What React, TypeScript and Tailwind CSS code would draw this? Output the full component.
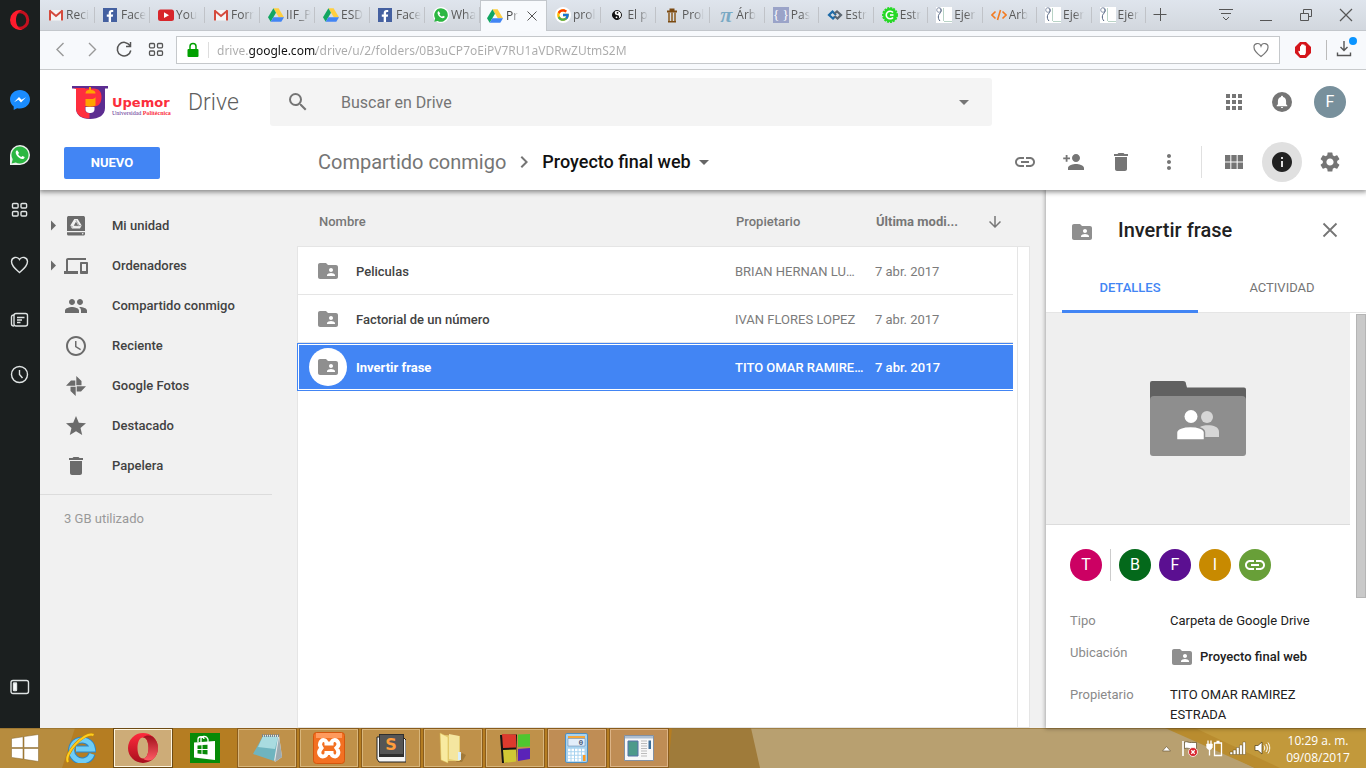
import React from "react";
import {
  MdAccessTime,
  MdApps,
  MdArrowDownward,
  MdArrowDropDown,
  MdChevronRight,
  MdDelete,
  MdFolderShared,
  MdInfo,
  MdLink,
  MdMoreVert,
  MdPhonelink,
  MdSearch,
  MdSettings,
  MdStar,
  MdViewModule,
} from "react-icons/md";
import { FaFacebookF } from "react-icons/fa";
import { FcGoogle } from "react-icons/fc";

/* ---------- Favicons ---------- */

const Gmail = () => (
  <svg viewBox="0 0 16 16" className="size-4 shrink-0">
    <path d="M1.5 3h13v10.500h-13z" fill="#f5f5f5" />
    <path d="M2 3.200v10.300M14 3.200v10.300" stroke="#d54b3d" strokeWidth="2" />
    <path d="M1.500 3.500L8 9l6.500-5.500" stroke="#d54b3d" strokeWidth="2" fill="none" />
  </svg>
);

const Facebook = () => (
  <span className="mr-[2px] flex size-[14px] shrink-0 items-end justify-end bg-[#4460a0] text-white">
    <FaFacebookF className="mr-px size-3" />
  </span>
);

const YouTube = () => (
  <svg viewBox="0 0 16 16" className="size-4 shrink-0">
    <rect x="0" y="2.500" width="16" height="11.500" rx="2.500" fill="#d8262b" />
    <path d="M6 5.300l5 2.900-5 2.900z" fill="#fff" />
  </svg>
);

const DriveLogo = () => (
  <svg viewBox="0 0 16 16" className="size-4 shrink-0">
    <path d="M5.400 1.200h5.200L16 10.300h-5.200z" fill="#ffcf40" />
    <path d="M5.400 1.200L8 5.700 2.700 14.700 0 10.300z" fill="#11a661" />
    <path d="M5.300 10.300H16l-2.700 4.500H2.700z" fill="#4285f4" />
  </svg>
);

const WhatsAppMark = ({ ring }: { ring?: boolean }) => (
  <span
    className={
      ring
        ? "flex size-5 shrink-0 items-center justify-center rounded-full rounded-bl-sm bg-[#eef2ee]"
        : "flex size-4 shrink-0 items-center justify-center rounded-full bg-white"
    }
  >
    <svg viewBox="0 0 20 20" className="size-full">
      <path d="M10 1.500a8.500 8.500 0 0 0-7.300 12.800L1.600 18.400l4.200-1A8.500 8.500 0 1 0 10 1.500z" fill="#2cb742" />
      <path
        d="M7.200 5.300c-.4 0-1.700.8-1.500 2.500.3 2.500 3.400 6 6.500 6.300 1.500 0 2.500-1 2.400-2.100l-2.100-1.100-1.200 1.200c-1.400-.5-2.700-1.800-3.200-3l1-1.100z"
        fill="#fff"
      />
    </svg>
  </span>
);

const YinYang = () => (
  <svg viewBox="0 0 16 16" className="size-4 shrink-0">
    <circle cx="8" cy="8" r="4.500" fill="#fff" stroke="#111" />
    <path d="M8 3.500a4.500 4.500 0 0 0 0 9 2.200 2.200 0 0 0 0-4.500 2.200 2.200 0 0 1 0-4.500z" fill="#111" />
    <circle cx="8.500" cy="5.800" r=".9" fill="#111" />
    <circle cx="7.500" cy="10.300" r=".9" fill="#fff" />
  </svg>
);

const Column = () => (
  <svg viewBox="0 0 16 16" className="size-4 shrink-0">
    <path d="M3 3.500h10v2H3zM5.500 1.500h5v2h-5zM4 14h8v1.500H4z" fill="#7b4a12" />
    <path d="M5 5.500v8.500M8 5.500v8.500M11 5.500v8.500" stroke="#8a5a1c" strokeWidth="1.500" />
  </svg>
);

const Pi = () => (
  <span className="flex size-4 shrink-0 items-center justify-center font-['Liberation_Serif',serif] text-[22px] leading-4 font-bold text-[#79a9c4] italic">
    π
  </span>
);

const Braces = () => (
  <span className="flex size-4 shrink-0 items-center justify-center bg-[#9aa3c8] font-['Liberation_Serif',serif] text-[13px] leading-4 text-white">
    {"{ }"}
  </span>
);

const Knot = () => (
  <svg viewBox="0 0 16 16" className="size-4 shrink-0" fill="none" strokeWidth="2.200">
    <path d="M8 9.500L6 11.500 2 8l3.500-3.500L9 8" stroke="#1c6aa8" />
    <path d="M7.500 6.500L10 4.500 14 8l-3.500 3.500L7.500 9" stroke="#5b6570" />
  </svg>
);

const GreenC = () => (
  <svg viewBox="0 0 16 16" className="size-4 shrink-0">
    <circle cx="8" cy="8" r="7" fill="#26d926" stroke="#26d926" strokeWidth="2" strokeDasharray="2 1" />
    <path d="M11 5.600A3.800 3.800 0 1 0 11 10.400" fill="none" stroke="#fff" strokeWidth="1.600" />
    <path d="M8 8h3.500" stroke="#fff" strokeWidth="1.600" />
  </svg>
);

const Sheet = () => (
  <svg viewBox="0 0 16 16" className="size-4 shrink-0">
    <path d="M0 0h16v16H0z" fill="#fff" />
    <circle cx="3" cy="3" r="2.300" fill="none" stroke="#8b97ad" />
    <path d="M4 1.500c3 3-1 5-1.500 7s0 4 1.500 5.500" fill="none" stroke="#51627f" />
    <path d="M7.500 1v13M8 14.500h8" stroke="#b9d3c6" />
  </svg>
);

const CodeMark = () => (
  <svg viewBox="0 0 16 16" className="size-4 shrink-0" fill="none" stroke="#f37a20" strokeWidth="1.600">
    <path d="M4.500 4.500L1 8l3.500 3.500M11.500 4.500L15 8l-3.500 3.500M9.500 3l-3 10" />
  </svg>
);

const GoogleMark = () => (
  <span className="flex size-4 shrink-0 items-center justify-center rounded-full bg-white">
    <FcGoogle className="size-[14px]" />
  </span>
);

/* ---------- Browser chrome ---------- */

type TabData = { icon: React.ReactNode; title: string };

const tabsBefore: TabData[] = [
  { icon: <Gmail />, title: "Reci" },
  { icon: <Facebook />, title: "Face" },
  { icon: <YouTube />, title: "You" },
  { icon: <Gmail />, title: "Forr" },
  { icon: <DriveLogo />, title: "IIF_P" },
  { icon: <DriveLogo />, title: "ESD" },
  { icon: <Facebook />, title: "Face" },
  { icon: <WhatsAppMark />, title: "Wha" },
];

const tabsAfter: TabData[] = [
  { icon: <GoogleMark />, title: "prol" },
  { icon: <YinYang />, title: "El p" },
  { icon: <Column />, title: "Prol" },
  { icon: <Pi />, title: "Árb" },
  { icon: <Braces />, title: "Pas" },
  { icon: <Knot />, title: "Estr" },
  { icon: <GreenC />, title: "Estr" },
  { icon: <Sheet />, title: "Ejer" },
  { icon: <CodeMark />, title: "Arb" },
  { icon: <Sheet />, title: "Ejer" },
  { icon: <Sheet />, title: "Ejer" },
];

const fade = "[mask-image:linear-gradient(to_right,black_55%,transparent)]";

function Tab({ tab, size }: { tab: TabData; size: string }) {
  return (
    <button
      className={`relative flex h-[30px] items-center gap-[2px] pl-2 text-left after:absolute after:right-0 after:top-[7px] after:h-4 after:w-px after:bg-[#c0c3c8] ${size}`}
    >
      {tab.icon}
      <span className={`whitespace-nowrap ${fade}`}>{tab.title}</span>
    </button>
  );
}

function ActiveTab() {
  return (
    <div className="flex h-[31px] w-[67px] shrink-0 items-center border-x border-t border-[#c3c7cc] bg-[#f8fafd] pl-[6px]">
      <button className="flex items-center gap-[3px] text-left">
        <DriveLogo />
        <span className={`whitespace-nowrap text-[#444] ${fade}`}>Pr</span>
      </button>
      <button aria-label="Cerrar pestaña" className="ml-auto mr-[9px]">
        <svg viewBox="0 0 10 10" className="size-[10px]" stroke="#555" fill="none">
          <path d="M.5.5l9 9M9.500.5l-9 9" />
        </svg>
      </button>
    </div>
  );
}

function TabBar() {
  return (
    <div className="flex h-[31px] border-b border-[#c3c7cc] bg-linear-to-b from-[#dfe5ed] to-[#d2d7de] font-['Open_Sans','Noto_Sans',sans-serif] text-xs text-[#5a5a5a]">
      <div className="flex min-w-0 flex-1">
        {tabsBefore.map((tab, i) => (
          <Tab key={i} tab={tab} size="w-[55px] shrink-0" />
        ))}
        <ActiveTab />
        {tabsAfter.map((tab, i) => (
          <Tab key={i} tab={tab} size="min-w-0 flex-1" />
        ))}
      </div>
      <div className="flex h-[30px] w-[220px] shrink-0 items-center justify-between pl-[7px] pr-[10px]">
        <button aria-label="Nueva pestaña" className="mr-[29px]">
          <svg viewBox="0 0 14 14" className="size-[14px]" stroke="#555" fill="none">
            <path d="M.5 6.500h13M7.500 0v13" />
          </svg>
        </button>
        <button aria-label="Menú de pestañas">
          <svg viewBox="0 0 20 20" className="size-5" stroke="#555" fill="none">
            <path d="M3 4.500h14M5 8.500h10M7 12l3 3 3-3" />
          </svg>
        </button>
        <button aria-label="Minimizar">
          <svg viewBox="0 0 20 20" className="size-5" stroke="#555" fill="none">
            <path d="M4 15.500h12" />
          </svg>
        </button>
        <button aria-label="Restaurar">
          <svg viewBox="0 0 20 20" className="size-5" stroke="#555" fill="none">
            <path d="M4.500 8.500h8v7h-8zM7.500 8.500v-4h8v7h-3" />
          </svg>
        </button>
        <button aria-label="Cerrar">
          <svg viewBox="0 0 20 20" className="size-5" stroke="#555" fill="none" strokeWidth="1.200">
            <path d="M4 4l12 12M16 4L4 16" />
          </svg>
        </button>
      </div>
    </div>
  );
}

function AddressBar() {
  return (
    <div className="flex h-[39px] items-center border-b border-[#c8cacc] bg-[#f7f9fc] pl-[10px] pr-3">
      <div className="flex items-center gap-3">
        <button aria-label="Atrás">
          <svg viewBox="0 0 20 20" className="size-5" stroke="#999" fill="none" strokeWidth="1.400">
            <path d="M13.500 3L7 9.500l6.500 6.500" />
          </svg>
        </button>
        <button aria-label="Adelante">
          <svg viewBox="0 0 20 20" className="size-5" stroke="#999" fill="none" strokeWidth="1.400">
            <path d="M7 3l6.500 6.500L7 16" />
          </svg>
        </button>
        <button aria-label="Recargar">
          <svg viewBox="0 0 20 20" className="size-5" stroke="#555" fill="none" strokeWidth="1.500">
            <path d="M16 5.700A6.800 6.800 0 1 0 16.800 10.500M16.500 2v4.500h-4.500" />
          </svg>
        </button>
        <button aria-label="Acceso rápido">
          <svg viewBox="0 0 20 20" className="size-5" stroke="#555" fill="none" strokeWidth="1.300">
            <rect x="3.500" y="3.500" width="5" height="4.300" rx="1" />
            <rect x="11.500" y="3.500" width="5" height="4.300" rx="1" />
            <rect x="3.500" y="11" width="5" height="4.300" rx="1" />
            <rect x="11.500" y="11" width="5" height="4.300" rx="1" />
          </svg>
        </button>
      </div>
      <div className="ml-[10px] flex h-7 min-w-0 flex-1 items-center border border-[#c5c8cb] bg-white px-[9px]">
        <svg viewBox="0 0 14 16" className="h-4 w-[14px] shrink-0">
          <rect x="1.500" y="7" width="11" height="8" rx="1" fill="#00a000" />
          <path d="M4 7V4.500a3 3 0 0 1 6 0V7" stroke="#00a000" strokeWidth="1.500" fill="none" />
        </svg>
        <span className="ml-2 h-4 w-px bg-[#ddd]" />
        <input
          aria-label="Dirección"
          defaultValue="drive.google.com/drive/u/2/folders/0B3uCP7oEiPV7RU1aVDRwZUtmS2M"
          className="ml-2 h-6 min-w-0 flex-1 bg-[linear-gradient(to_right,#aaaaaa_32px,#111111_32px,#111111_99px,#aaaaaa_99px)] bg-clip-text font-['Noto_Sans','Open_Sans',sans-serif] text-xs text-transparent outline-none"
        />
        <button aria-label="Añadir a marcadores">
          <svg viewBox="0 0 18 18" className="size-[18px]" stroke="#777" fill="none" strokeWidth="1.200">
            <path d="M9 15.500C5 12.500 2 10 2 6.500A3.600 3.600 0 0 1 9 5a3.600 3.600 0 0 1 7 1.500c0 3.500-3 6-7 9z" />
          </svg>
        </button>
      </div>
      <button aria-label="Bloqueador" className="ml-[15px]">
        <svg viewBox="0 0 16 16" className="size-4">
          <path d="M5 0h6l5 5v6l-5 5H5l-5-5V5z" fill="#d5151b" />
          <path
            d="M5 12.500c-1-1.500-2-3-1.500-3.500S5 9.500 5 9V4.500c0-.8 1-.8 1 0V3c0-.8 1.200-.8 1.200 0v-.3c0-.8 1.300-.8 1.300 0V3c0-.8 1.200-.8 1.200 0v1.200c0-.8 1.200-.8 1.200 0V10c0 1.500-.5 2-1 3H5z"
            fill="#fff"
          />
        </svg>
      </button>
      <span className="ml-[15px] h-5 w-px bg-[#bbb]" />
      <button aria-label="Descargas" className="relative ml-[7px]">
        <svg viewBox="0 0 20 20" className="size-5" stroke="#555" fill="none" strokeWidth="1.400">
          <path d="M10 1v9M6.500 7l3.500 3.500L13.500 7M3.500 12.500V15.500h13v-3" />
        </svg>
        <span className="absolute -right-[3px] -top-[3px] size-2 rounded-full bg-[#0a94ff]" />
      </button>
    </div>
  );
}

function OperaSidebar() {
  const line = { fill: "none", stroke: "#dfe3e3", strokeWidth: 1.4 };
  const cell = "flex h-[55px] w-10 items-center justify-center";
  return (
    <nav className="flex w-10 shrink-0 flex-col bg-[#1b1f1f]">
      <button aria-label="Opera" className="mb-8 flex h-10 items-center justify-center">
        <svg viewBox="0 0 20 20" className="size-5">
          <ellipse cx="10" cy="10" rx="7.800" ry="8.200" fill="none" stroke="#c4101f" strokeWidth="3" />
          <path d="M10 0a10 10 0 0 0 0 20 12 12 0 0 0 3-.6C9 20 6 15 6 10S9 0 13 .6A12 12 0 0 0 10 0z" fill="#ff1b2d" />
        </svg>
      </button>
      <button aria-label="Messenger" className={cell}>
        <svg viewBox="0 0 20 20" className="size-5">
          <path
            d="M10 0C4.500 0 0 4.100 0 9.300c0 2.900 1.400 5.400 3.700 7.100V20l3.400-1.800c.9.200 1.900.4 2.900.4 5.500 0 10-4.100 10-9.300S15.500 0 10 0z"
            fill="#1a8cff"
          />
          <path d="M4 12.300l5-5.200 2.600 2.600L16 7.200l-5 5.200-2.600-2.600z" fill="#fff" />
        </svg>
      </button>
      <button aria-label="WhatsApp" className={cell}>
        <WhatsAppMark ring />
      </button>
      <button aria-label="Acceso rápido" className={cell}>
        <svg viewBox="0 0 20 20" className="size-5" {...line}>
          <rect x="2.500" y="3.500" width="5.600" height="4.500" rx="1" />
          <rect x="11" y="3.500" width="5.600" height="4.500" rx="1" />
          <rect x="2.500" y="11.500" width="5.600" height="4.500" rx="1" />
          <rect x="11" y="11.500" width="5.600" height="4.500" rx="1" />
        </svg>
      </button>
      <button aria-label="Marcadores" className={cell}>
        <svg viewBox="0 0 20 20" className="size-5" {...line}>
          <path d="M9.500 17.500C5 13.500 1.500 11 1.500 6.500A4.300 4.300 0 0 1 9.500 4.500 4.300 4.300 0 0 1 17.500 6.500c0 4.500-3.500 7-8 11z" />
        </svg>
      </button>
      <button aria-label="Noticias" className={cell}>
        <svg viewBox="0 0 20 20" className="size-5" {...line}>
          <rect x="4" y="3.500" width="13.500" height="12.500" rx="2" />
          <path d="M4 5c-1.500 0-2.500.5-2.500 2v7c0 1.500 1 2 2.500 2M7 7.500h7.500M7 10h5M7 12.500h3.500" />
        </svg>
      </button>
      <button aria-label="Historial" className={cell}>
        <svg viewBox="0 0 20 20" className="size-5" {...line}>
          <circle cx="9.500" cy="9.500" r="8" />
          <path d="M9.500 5v4.500l3 3.500" />
        </svg>
      </button>
      <button aria-label="Panel lateral" className="mt-auto flex h-[82px] items-center justify-center">
        <svg viewBox="0 0 20 20" className="size-5" {...line}>
          <rect x="1" y="3.500" width="17.500" height="13" rx="2" />
          <rect x="3.500" y="6" width="3" height="7.500" rx=".5" fill="#fff" />
        </svg>
      </button>
    </nav>
  );
}

/* ---------- Drive ---------- */

function UpemorLogo() {
  return (
    <div className="flex gap-1">
      <svg viewBox="0 0 36 33" className="h-[33px] w-9">
        <path d="M0 0h36v2.500h-3V22c0 7-6 11-15 11S4 29 4 22V2.500H0z" fill="#5c2d91" />
        <path d="M1 2h12v20c0 3 1 5 4.500 5v5.500C9 32.500 4 28.500 4 22V3z" fill="#ff2e3e" />
        <path d="M13 2.500h9c5 0 7.500 3.500 7.500 8.500 0 5.500-2.500 9.500-7.500 9.500h-9z" fill="#ff2e3e" />
        <path d="M17 1h2v3c3 0 4.500 1.500 4.500 3.500h-10C13.500 5 15 4 17 4z" fill="#ffa400" />
        <path d="M13.500 13h5c3 0 5-.5 5-2.500v9c-3 1.500-7 1.500-10 .5z" fill="#ffa400" />
        <path d="M13.500 21h9v2c0 3-2 4-4.500 4s-4.500-1-4.500-4z" fill="#fff" />
      </svg>
      <div className="flex w-[60px] flex-col pt-[10px]">
        <span className="font-['DejaVu_Sans',sans-serif] text-[13px] leading-[14px] font-bold text-[#fb2e3c]">Upemor</span>
        <span className="font-['Liberation_Serif',serif] text-[6px] leading-[7px] whitespace-nowrap text-[#5c2d91]">
          Universidad <b className="text-[#fb2e3c]">Politécnica</b>
        </span>
      </div>
    </div>
  );
}

const iconBtn = "flex size-10 items-center justify-center rounded-full";

function DriveHeader() {
  return (
    <header className="relative z-20 bg-white pt-2 text-[#757575] shadow-[0_1px_5px_1px_rgba(0,0,0,0.45)] [clip-path:inset(0_0_-8px_0)]">
      <div className="flex h-12 items-center">
        <div className="flex w-[230px] shrink-0 items-center pl-8">
          <UpemorLogo />
          <a href="#drive" className="ml-4 pt-[2px] text-[23px] font-light text-[#5f5f5f]">
            Drive
          </a>
        </div>
        <div className="flex h-12 min-w-0 flex-1 items-center rounded-[3px] bg-[#f4f4f4] pl-4 pr-4">
          <button aria-label="Buscar">
            <MdSearch className="size-6" />
          </button>
          <input
            aria-label="Buscar en Drive"
            placeholder="Buscar en Drive"
            className="ml-[31px] h-full min-w-0 flex-1 bg-transparent text-base outline-none placeholder:text-[#757575]"
          />
          <button aria-label="Opciones de búsqueda">
            <MdArrowDropDown className="size-6" />
          </button>
        </div>
        <div className="flex w-[374px] shrink-0 items-center justify-end gap-2 pr-4">
          <button aria-label="Aplicaciones" className={iconBtn}>
            <MdApps className="size-6" />
          </button>
          <button aria-label="Notificaciones" className={iconBtn}>
            <svg viewBox="0 0 20 20" className="size-5">
              <circle cx="10" cy="10" r="10" fill="#757575" />
              <path
                d="M10 3.800c-.6 0-1 .4-1 1v.3C6.900 5.600 5.900 7.300 5.900 9.300v3l-1.200 1.200v.7h10.600v-.7l-1.200-1.200v-3c0-2-1-3.700-3.100-4.200v-.3c0-.6-.4-1-1-1zM8.900 14.900c0 .6.500 1.100 1.100 1.100s1.100-.5 1.100-1.100z"
                fill="#fff"
              />
            </svg>
          </button>
          <button aria-label="Cuenta" className={iconBtn}>
            <span className="flex size-8 items-center justify-center rounded-full bg-[#78909c] text-base text-white">F</span>
          </button>
        </div>
      </div>
      <div className="flex h-16 items-center pl-6 pr-4 pt-2">
        <div className="w-[254px] shrink-0 pt-[2px]">
          <button className="h-8 w-24 rounded-xs bg-[#4285f4] text-[13px] font-bold text-white">NUEVO</button>
        </div>
        <nav className="flex flex-1 items-center whitespace-nowrap">
          <a href="#compartido" className="text-xl">
            Compartido conmigo
          </a>
          <MdChevronRight className="mx-[6px] size-6" />
          <button className="flex items-center text-lg font-medium text-[#111]">
            Proyecto final web
            <MdArrowDropDown className="ml-px size-6 text-[#666]" />
          </button>
        </nav>
        <div className="flex gap-2">
          <button aria-label="Obtener enlace" className={iconBtn}>
            <MdLink className="size-6" />
          </button>
          <button aria-label="Compartir" className={iconBtn}>
            <svg viewBox="0 0 24 24" className="size-6" fill="currentColor">
              <path d="M15 12c2.210 0 4-1.790 4-4s-1.790-4-4-4-4 1.790-4 4 1.790 4 4 4zM6.500 7.500V5H4.700v2.500H2.200v1.800h2.500v2.500h1.800V9.300H9V7.500zM15 14c-2.670 0-8 1.340-8 4v2h16v-2c0-2.660-5.330-4-8-4z" />
            </svg>
          </button>
          <button aria-label="Eliminar" className={iconBtn}>
            <MdDelete className="size-6" />
          </button>
          <button aria-label="Más acciones" className={iconBtn}>
            <MdMoreVert className="size-6" />
          </button>
        </div>
        <span className="mx-3 h-8 w-px bg-[#e0e0e0]" />
        <div className="flex gap-2">
          <button aria-label="Vista de cuadrícula" className={iconBtn}>
            <MdViewModule className="size-6" />
          </button>
          <button aria-label="Ver detalles" className={`${iconBtn} bg-[#e0e0e0] text-[#212121]`}>
            <MdInfo className="size-6" />
          </button>
          <button aria-label="Configuración" className={iconBtn}>
            <MdSettings className="size-6" />
          </button>
        </div>
      </div>
    </header>
  );
}

const PeopleIcon = () => (
  <svg viewBox="0 0 24 24" className="size-6" fill="currentColor">
    <path d="M16 11c1.660 0 2.990-1.340 2.990-3S17.660 5 16 5c-1.660 0-3 1.340-3 3s1.340 3 3 3zm-8 0c1.660 0 2.990-1.340 2.990-3S9.660 5 8 5C6.340 5 5 6.340 5 8s1.340 3 3 3zm0 2c-2.330 0-7 1.170-7 3.500V19h14v-2.500c0-2.330-4.670-3.500-7-3.500zm8 0c-.29 0-.62.020-.97.050 1.160.84 1.970 1.970 1.970 3.450V19h6v-2.500c0-2.330-4.670-3.500-7-3.500z" />
  </svg>
);

const MyDriveIcon = () => (
  <svg viewBox="0 0 24 24" className="size-6" fill="currentColor">
    <path d="M3 17V4c0-1.400.7-2 2-2h14c1.300 0 2 .6 2 2v13zM3 18.200h18v1.800c0 .9-.6 1.500-1.500 1.500h-15c-.9 0-1.500-.6-1.500-1.500z" />
    <path d="M10.300 5h3.400l4 6.600-1.700 2.900H8l-1.700-2.900zM12 7.800l-2.300 4h4.600z" fill="#f1f1f1" fillRule="evenodd" />
    <path d="M11.800 6l3.600 6M6.800 11.800l2.300 1.500M17.500 11.700h-6" stroke="#6b6b6b" strokeWidth=".5" />
    <circle cx="18.700" cy="19.800" r=".8" fill="#f1f1f1" />
  </svg>
);

const PhotosIcon = () => (
  <svg viewBox="0 0 24 24" className="size-6" fill="currentColor">
    <path d="M12.300 2L17.500 7v4.300h-5.200zM22 12.300L17 17.500h-4.300v-5.200zM11.700 22L6.500 17v-4.300h5.200zM2 11.700L7 6.500h4.300v5.200z" />
  </svg>
);

const navItems = [
  { label: "Mi unidad", icon: <MyDriveIcon />, caret: true },
  { label: "Ordenadores", icon: <MdPhonelink className="size-6" />, caret: true },
  { label: "Compartido conmigo", icon: <PeopleIcon /> },
  { label: "Reciente", icon: <MdAccessTime className="size-6" /> },
  { label: "Google Fotos", icon: <PhotosIcon /> },
  { label: "Destacado", icon: <MdStar className="size-6" /> },
  { label: "Papelera", icon: <MdDelete className="size-6" /> },
];

function DriveNav() {
  return (
    <aside className="w-[232px] shrink-0 pt-4 text-[13px]">
      <ul>
        {navItems.map((item) => (
          <li key={item.label}>
            <a href="#nav" className="flex h-10 items-center pl-2 font-medium text-[#424242]">
              <svg viewBox="0 0 16 16" className="size-4 text-[#6b6b6b]">
                {item.caret && <path d="M3 2.500l5 5-5 5z" fill="currentColor" />}
              </svg>
              <span className="text-[#6b6b6b]">{item.icon}</span>
              <span className="ml-6">{item.label}</span>
            </a>
          </li>
        ))}
      </ul>
      <div className="mt-2 border-t border-[#dcdcdc] pl-6 pt-[14px] leading-5 text-[#999]">3 GB utilizado</div>
    </aside>
  );
}

const rows = [
  { name: "Peliculas", owner: "BRIAN HERNAN LUNA", date: "7 abr. 2017" },
  { name: "Factorial de un número", owner: "IVAN FLORES LOPEZ", date: "7 abr. 2017" },
  { name: "Invertir frase", owner: "TITO OMAR RAMIREZ ESTRADA", date: "7 abr. 2017", selected: true },
];

function FileList() {
  const th = "h-[57px] border-b border-[#e5e5e5] bg-[#f1f1f1] p-0 pt-2 text-left font-medium text-[#777]";
  return (
    <section className="ml-[25px] mr-4 flex min-w-0 flex-1 border-b border-[#e5e5e5] bg-white text-[13px]">
      <div className="flex min-w-0 flex-1 flex-col">
        <table className="w-full table-fixed border-separate border-spacing-0">
          <colgroup>
            <col />
            <col className="w-[140px]" />
            <col className="w-[138px]" />
          </colgroup>
          <thead>
            <tr>
              <th className={`${th} pl-[22px]`}>Nombre</th>
              <th className={`${th} pl-px`}>Propietario</th>
              <th className={`${th} pl-px`}>
                <button className="flex w-full items-center justify-between pr-[9px] font-bold">
                  Última modi...
                  <MdArrowDownward className="size-[18px]" />
                </button>
              </th>
            </tr>
          </thead>
          <tbody>
            {rows.map((row) => {
              const cell = row.selected ? "border-y border-[#4285f4] p-0" : "border-b border-[#e5e5e5] p-0";
              const inner = row.selected
                ? "flex h-[46px] items-center border-y border-white bg-[#4285f4]"
                : "flex h-[47px] items-center";
              return (
                <tr key={row.name} className={row.selected ? "font-bold text-white" : "text-[#7b7b7b]"}>
                  <td className={`${cell} border-l`}>
                    <div className={row.selected ? `${inner} border-l pl-[10px]` : `${inner} pl-[11px]`}>
                      <span className="flex size-[38px] shrink-0 items-center justify-center rounded-full bg-white text-[#8f8f8f]">
                        <MdFolderShared className="size-6" />
                      </span>
                      <span className={row.selected ? "ml-[9px] pt-[2px]" : "ml-[9px] pt-[2px] font-medium text-[#424242]"}>
                        {row.name}
                      </span>
                    </div>
                  </td>
                  <td className={cell}>
                    <div className={inner}>
                      <span className={row.selected ? "w-[132px] truncate pt-[2px] font-medium" : "w-[123px] truncate pt-[2px]"}>
                        {row.owner}
                      </span>
                    </div>
                  </td>
                  <td className={cell}>
                    <div className={inner}>
                      <span className={row.selected ? "pt-[2px] font-medium" : "pt-[2px]"}>{row.date}</span>
                    </div>
                  </td>
                </tr>
              );
            })}
          </tbody>
        </table>
        <div className="flex-1 border-l border-[#e5e5e5]" />
      </div>
      <div className="w-1">
        <div className="h-[57px] border-b border-[#e5e5e5] bg-[#f1f1f1]" />
      </div>
      <div className="flex w-[13px] flex-col">
        <div className="h-[57px] border-b border-[#e5e5e5] bg-[#f1f1f1]" />
        <div className="flex-1 border-x border-[#e5e5e5]" />
      </div>
    </section>
  );
}

const avatar = "flex size-8 items-center justify-center rounded-full text-base text-white";

function DetailsPanel() {
  return (
    <aside className="relative z-10 flex w-80 shrink-0 flex-col bg-white shadow-[0_0_4px_1px_rgba(0,0,0,0.3)]">
      <div className="flex h-20 shrink-0 items-center pl-6 pr-6">
        <MdFolderShared className="mt-1 size-6 text-[#8f8f8f]" />
        <h2 className="ml-6 flex-1 text-xl font-medium text-[#212121]">Invertir frase</h2>
        <button aria-label="Cerrar panel">
          <svg viewBox="0 0 24 24" className="size-6" stroke="#757575" strokeWidth="1.800">
            <path d="M5.500 5.500l13 13M18.500 5.500l-13 13" />
          </svg>
        </button>
      </div>
      <div role="tablist" className="flex h-[43px] shrink-0 gap-4 px-4 text-[13px] shadow-[inset_0_-1px_0_#e5e5e5]">
        <button role="tab" aria-selected="true" className="flex-1 border-b-[3px] border-[#4285f4] pb-1 font-medium text-[#4285f4]">
          DETALLES
        </button>
        <button role="tab" aria-selected="false" className="flex-1 border-b-[3px] border-transparent pb-1 text-[#757575]">
          ACTIVIDAD
        </button>
      </div>
      <div className="flex min-h-0 flex-1">
        <div className="min-w-0 flex-1 overflow-hidden">
          <div className="flex h-[212px] items-center justify-center border-b border-[#dcdcdc] bg-[#efefef]">
            <svg viewBox="0 0 96 76" className="h-[76px] w-24">
              <path d="M0 20V2a2 2 0 0 1 2-2h31a3 3 0 0 1 3 3l1 3.500h57a2 2 0 0 1 2 2V25H0z" fill="#616161" />
              <path d="M0 19a4 4 0 0 1 4-4h88a4 4 0 0 1 4 4v53a3 3 0 0 1-3 3H3a3 3 0 0 1-3-3z" fill="#8e8e8e" />
              <circle cx="57" cy="36" r="6" fill="#d6d6d6" />
              <path d="M50 46c4-2.500 19-3 19 5v5H50z" fill="#d6d6d6" />
              <circle cx="41" cy="35.500" r="6.500" fill="#fff" />
              <path d="M26.500 59v-7.500c0-8 28-8 28 0V59z" fill="#fff" stroke="#8e8e8e" strokeWidth="1.500" />
            </svg>
          </div>
          <div className="flex gap-2 px-6 pt-6">
            <span className={`${avatar} bg-[#cc0063]`}>T</span>
            <span className="w-px bg-[#ccc]" />
            <span className={`${avatar} bg-[#04691b]`}>B</span>
            <span className={`${avatar} bg-[#5b0f91]`}>F</span>
            <span className={`${avatar} bg-[#c88a00]`}>I</span>
            <span className={`${avatar} bg-[#689f38]`}>
              <MdLink className="size-6" />
            </span>
          </div>
          <dl className="grid grid-cols-[100px_1fr] px-6 pt-[30px] text-[13px] leading-5 text-[#212121]">
            <dt className="text-[#8a8a8a]">Tipo</dt>
            <dd className="pb-3">Carpeta de Google Drive</dd>
            <dt className="text-[#8a8a8a]">Ubicación</dt>
            <dd className="pb-[14px]">
              <a href="#proyecto" className="flex h-7 items-center gap-[6px] font-medium">
                <MdFolderShared className="size-6 text-[#8f8f8f]" />
                Proyecto final web
              </a>
            </dd>
            <dt className="text-[#8a8a8a]">Propietario</dt>
            <dd>TITO OMAR RAMIREZ ESTRADA</dd>
          </dl>
        </div>
        <div className="flex w-4 shrink-0 justify-end pt-px">
          <div className="h-[284px] w-[10px] border border-[#b5b5b5] bg-[#c9c9c9]" />
        </div>
      </div>
    </aside>
  );
}

/* ---------- Taskbar ---------- */

const WindowsMark = () => (
  <svg viewBox="0 0 28 28" className="size-7" fill="#fff" stroke="#80622a" strokeWidth=".5">
    <path d="M.5 4.500L12 2.800v10.700H.5zM13 2.600L27.500.5v13H13zM.5 14.500H12v10.600L.5 23.400zM13 14.500h14.500v13L13 25.300z" />
  </svg>
);

const ExplorerMark = () => (
  <svg viewBox="0 0 30 30" className="size-[30px]">
    <path d="M26 21A10.500 10.500 0 1 1 26.500 16H10" fill="none" stroke="#2a86c8" strokeWidth="7" />
    <path d="M26 21A10.500 10.500 0 1 1 26.500 16H10" fill="none" stroke="#6fcdf6" strokeWidth="5" />
    <path d="M2 29C-3 22 18-2 27.500 2" fill="none" stroke="#c98f00" strokeWidth="3" />
    <path d="M2 29C-3 22 18-2 27.500 2" fill="none" stroke="#ffcd1f" strokeWidth="2" />
  </svg>
);

const OperaMark = () => (
  <svg viewBox="0 0 30 30" className="size-[30px]">
    <defs>
      <linearGradient id="opera-ring" x1="0" y1="0" x2="0" y2="1">
        <stop offset="0" stopColor="#ff2a3c" />
        <stop offset="1" stopColor="#a80f1d" />
      </linearGradient>
      <linearGradient id="opera-edge" x1="0" y1="0" x2="0" y2="1">
        <stop offset="0" stopColor="#a0101c" />
        <stop offset="1" stopColor="#ff5b64" />
      </linearGradient>
    </defs>
    <path
      d="M15 0a15 15 0 1 0 0 30 15 15 0 0 0 0-30zm0 4.500c3.500 0 5.500 4.700 5.500 10.500s-2 10.500-5.500 10.500S9.500 20.800 9.500 15 11.500 4.500 15 4.500z"
      fill="url(#opera-ring)"
      fillRule="evenodd"
    />
    <path
      d="M15 4.500c3-2.500 6.500-2.500 10-.7a15 15 0 0 1 0 22.400c-3.500 1.800-7 1.800-10-.7 3.500 0 5.500-4.700 5.500-10.500S18.500 4.500 15 4.500z"
      fill="url(#opera-edge)"
    />
  </svg>
);

const StoreMark = () => (
  <svg viewBox="0 0 30 30" className="size-[30px]">
    <path d="M0 0h30v30H0z" fill="#078a07" />
    <path d="M8 9V6c0-3 6-3 6 0M11 9V5.500c0-3 6-3 7 1V9" fill="none" stroke="#fff" strokeWidth="1.300" />
    <path d="M4 9.500l21-1.500v19L4 24.500z" fill="#fff" />
    <path d="M7.500 12.500l4-.3v3.800h-4zM12.500 12.100l5-.4v4.300h-5zM7.500 17h4v3.900l-4-.3zM12.500 17h5v4.500l-5-.5z" fill="#078a07" />
  </svg>
);

const NotepadMark = () => (
  <svg viewBox="0 0 32 30" className="h-[30px] w-8">
    <path d="M12 2h16l3 22-7 5z" fill="#e3e7e9" />
    <path d="M28 4l3 20-7 5z" fill="#9daab0" />
    <path d="M12 3l15 1-4 24L2 21z" fill="#6fb4bf" />
    <path d="M12 3l15 1-3 12-17-2z" fill="#a9dbe0" />
    <path d="M11 2.500h17" stroke="#7b858a" strokeWidth="3" strokeDasharray="1 1" />
  </svg>
);

const XamppMark = () => (
  <svg viewBox="0 0 32 32" className="size-8">
    <rect x=".5" y=".5" width="31" height="31" rx="3" fill="#f37022" stroke="#d4560d" />
    <path d="M3 1h26v5H3z" fill="#ff9a5c" />
    <path
      d="M8 9.500c2-3 5.500-1 5.500 2h5c0-3 3.500-5 6-2s.5 5-1 6.500c1.500 2 3 4 1 7s-6 1-6-2h-5c0 3-4 5-6.500 2s0-5 1.500-7c-1.500-2-2.500-4-.5-6.500z"
      fill="none"
      stroke="#fff"
      strokeWidth="4"
    />
  </svg>
);

const SublimeMark = () => (
  <svg viewBox="0 0 30 30" className="size-[30px]">
    <path d="M1 4h26l3 3v22H3l-2-3z" fill="#f5f5f5" stroke="#222" />
    <path d="M3 1h25v23H3z" fill="#2f2f2f" />
    <path d="M4 2h23v19H4z" fill="#555" />
    <text x="15" y="17" textAnchor="middle" fontFamily="DejaVu Sans" fontWeight="bold" fontSize="16" fill="#ff9d3c">
      S
    </text>
  </svg>
);

const FolderMark = () => (
  <svg viewBox="0 0 30 32" className="h-8 w-[30px]">
    <path d="M18 30l6-9 4 2-4 7z" fill="#6b4c1a" opacity=".35" />
    <path d="M6 3l16 1v25H6z" fill="#e6cd72" />
    <path d="M11 2l10 2v25l-10-2z" fill="#f4e6a0" />
    <path d="M2 1l8 4v26l-7-3z" fill="#f8eaa0" stroke="#d6b84f" strokeWidth=".5" />
    <path d="M20 20h3v8h-3z" fill="#d9eefa" />
  </svg>
);

const BlocksMark = () => (
  <svg viewBox="0 0 30 32" className="h-8 w-[30px]">
    <path d="M0 3l2 28h2l12-3 1-25.500z" fill="#151515" />
    <path d="M2 2l14 .5v13L3 16z" fill="#dd3a2d" />
    <path d="M18 2.500L30 2v12.500l-12 .5z" fill="#4fc62f" />
    <path d="M3 18l13-.5v12L4 31z" fill="#d1c734" />
    <path d="M18 17l12-1v11l-12 2z" fill="#5a23b8" />
  </svg>
);

const CalcMark = () => (
  <svg viewBox="0 0 24 30" className="h-[30px] w-6">
    <rect x=".5" y=".5" width="22" height="29" rx="1.500" fill="#a9d3ef" stroke="#4e8fc0" />
    <path d="M3 3h17v2.500H3z" fill="#f6a73a" />
    <path d="M3 5.500h17V13H3z" fill="#e3eefa" stroke="#5d7da0" strokeWidth=".5" />
    <text x="16" y="12" textAnchor="middle" fontFamily="Liberation Mono" fontWeight="bold" fontSize="8" fill="#4d5d7d">
      0
    </text>
    <path d="M3 17h17M3 20.500h17M3 24h14M3 27h14" stroke="#fff" strokeWidth="2.500" strokeDasharray="2.500 1" />
    <path d="M18 22h2.500v6H18z" fill="#ff9a1f" />
  </svg>
);

const WindowMark = () => (
  <svg viewBox="0 0 30 26" className="h-[26px] w-[30px]">
    <path d="M.5.5h29v25H.5z" fill="#f8f8f8" stroke="#8391a3" />
    <path d="M1 1h28v2.500H1z" fill="#aebfd2" />
    <path d="M4 6h10v15H4z" fill="#4d9a8a" stroke="#5670a8" />
    <path d="M17 6h6M17 8.500h6M17 11h6M17 13.500h6M17 16h6M17 18.500h6M17 21h6" stroke="#bbb" />
    <path d="M24.500 5.500h2.500V14h-2.500z" fill="#3d6f9a" />
  </svg>
);

const apps = [
  { name: "Internet Explorer", icon: <ExplorerMark />, state: "idle" },
  { name: "Opera", icon: <OperaMark />, state: "active" },
  { name: "Tienda", icon: <StoreMark />, state: "idle" },
  { name: "Bloc de notas", icon: <NotepadMark />, state: "open" },
  { name: "XAMPP", icon: <XamppMark />, state: "open" },
  { name: "Sublime Text", icon: <SublimeMark />, state: "open" },
  { name: "Explorador de archivos", icon: <FolderMark />, state: "open" },
  { name: "CodeBlocks", icon: <BlocksMark />, state: "open" },
  { name: "Calculadora", icon: <CalcMark />, state: "warm" },
  { name: "Ventana", icon: <WindowMark />, state: "warm" },
];

const appStyles: Record<string, string> = {
  idle: "",
  active: "border border-[#6d4a14] bg-[#cdac78] shadow-[inset_0_0_0_1px_#fff6e0]",
  open: "border border-[#8a5c1c] bg-[#bf914a] shadow-[inset_0_0_0_1px_#d8b67c]",
  warm: "border border-[#8a5c1c] bg-[#bf8d55] shadow-[inset_0_0_0_1px_#dcb487]",
};

function Taskbar() {
  return (
    <footer className="relative isolate flex h-10 shrink-0 bg-[#b57d22]">
      <svg viewBox="0 0 1366 40" preserveAspectRatio="none" className="absolute inset-0 -z-10 size-full">
        <path d="M0 0h75L62 40H0z" fill="#b78c3e" />
        <path d="M672 0h80l8 40h-92z" fill="#9f7b3a" />
        <path d="M751 0h424l80 40H760z" fill="#b8a070" />
        <path d="M1165 0h60l70 40h-40z" fill="#b98c2f" />
        <path d="M1195 0h171v40h-86z" fill="#c2993b" />
        <path d="M0 .5h1366" stroke="#8f6a2a" opacity=".6" />
      </svg>
      <div className="flex flex-1 gap-[2px]">
        <button aria-label="Inicio" className="flex w-[49px] items-center justify-center">
          <WindowsMark />
        </button>
        {apps.map((app) => (
          <button key={app.name} aria-label={app.name} className={`flex w-[60px] items-center justify-center ${appStyles[app.state]}`}>
            {app.icon}
          </button>
        ))}
      </div>
      <div className="flex items-center gap-1">
        <button aria-label="Mostrar iconos ocultos" className="mr-1">
          <svg viewBox="0 0 20 20" className="size-5">
            <path d="M10.500 13l4-4.500 4 4.500z" fill="#fff" stroke="#6b5a3a" strokeWidth=".7" />
          </svg>
        </button>
        <button aria-label="Centro de actividades">
          <svg viewBox="0 0 20 20" className="size-5">
            <path d="M3 3v15" stroke="#fff" strokeWidth="1.600" />
            <path d="M4.500 4c3-1 4 1 7 .5h5V11H12c-3 0-4-1.500-7.500-.5z" fill="#fff" stroke="#5a4a2a" strokeWidth=".7" />
            <circle cx="13" cy="14" r="4.500" fill="#d8242c" stroke="#fff" strokeWidth=".8" />
            <path d="M11.300 12.300l3.400 3.400M14.700 12.300l-3.400 3.400" stroke="#fff" strokeWidth="1.300" />
          </svg>
        </button>
        <button aria-label="Batería">
          <svg viewBox="0 0 20 20" className="size-5" stroke="#fff" fill="none" strokeWidth="1.300">
            <path d="M4 2.500v4M7 2.500v4M2.500 6.500h6M5.500 9v8.500" />
            <path d="M3 7h5v2.500L6.500 11h-2L3 9.500z" fill="#fff" />
            <path d="M10.500 5h7v12.500h-7zM12.500 3.500h3" />
          </svg>
        </button>
        <button aria-label="Red">
          <svg viewBox="0 0 20 20" className="size-5" fill="#fff" stroke="#4c3b12" strokeWidth=".4">
            <path d="M2 14h2.700v2.500H2zM5.200 12h2.700v4.500H5.200zM8.400 9.500h2.700v7H8.400zM11.600 7h2.700v9.500h-2.700zM14.800 4h2.700v12.500h-2.700z" />
          </svg>
        </button>
        <button aria-label="Volumen">
          <svg viewBox="0 0 20 20" className="size-5">
            <path d="M3 7.500h3L10 4v12l-4-3.500H3z" fill="#fff" stroke="#4c3b12" strokeWidth=".7" />
            <path d="M12 7.500c1 1.500 1 3.500 0 5M14 6c1.800 2.500 1.800 5.500 0 8M16 4.500c2.300 3.500 2.300 7.500 0 11" fill="none" stroke="#fff" />
          </svg>
        </button>
      </div>
      <button className="ml-[6px] mr-2 flex w-20 flex-col items-center justify-center pt-[2px] font-['Open_Sans','Noto_Sans',sans-serif] text-xs leading-[17px] whitespace-nowrap text-white">
        <span>10:29 a. m.</span>
        <span>09/08/2017</span>
      </button>
    </footer>
  );
}

export default function App() {
  return (
    <div className="flex h-screen flex-col overflow-hidden bg-[#f1f1f1] font-[Roboto,sans-serif]">
      <div className="flex min-h-0 flex-1">
        <OperaSidebar />
        <div className="flex min-w-0 flex-1 flex-col">
          <TabBar />
          <AddressBar />
          <DriveHeader />
          <main className="flex min-h-0 flex-1">
            <DriveNav />
            <FileList />
            <DetailsPanel />
          </main>
        </div>
      </div>
      <Taskbar />
    </div>
  );
}
